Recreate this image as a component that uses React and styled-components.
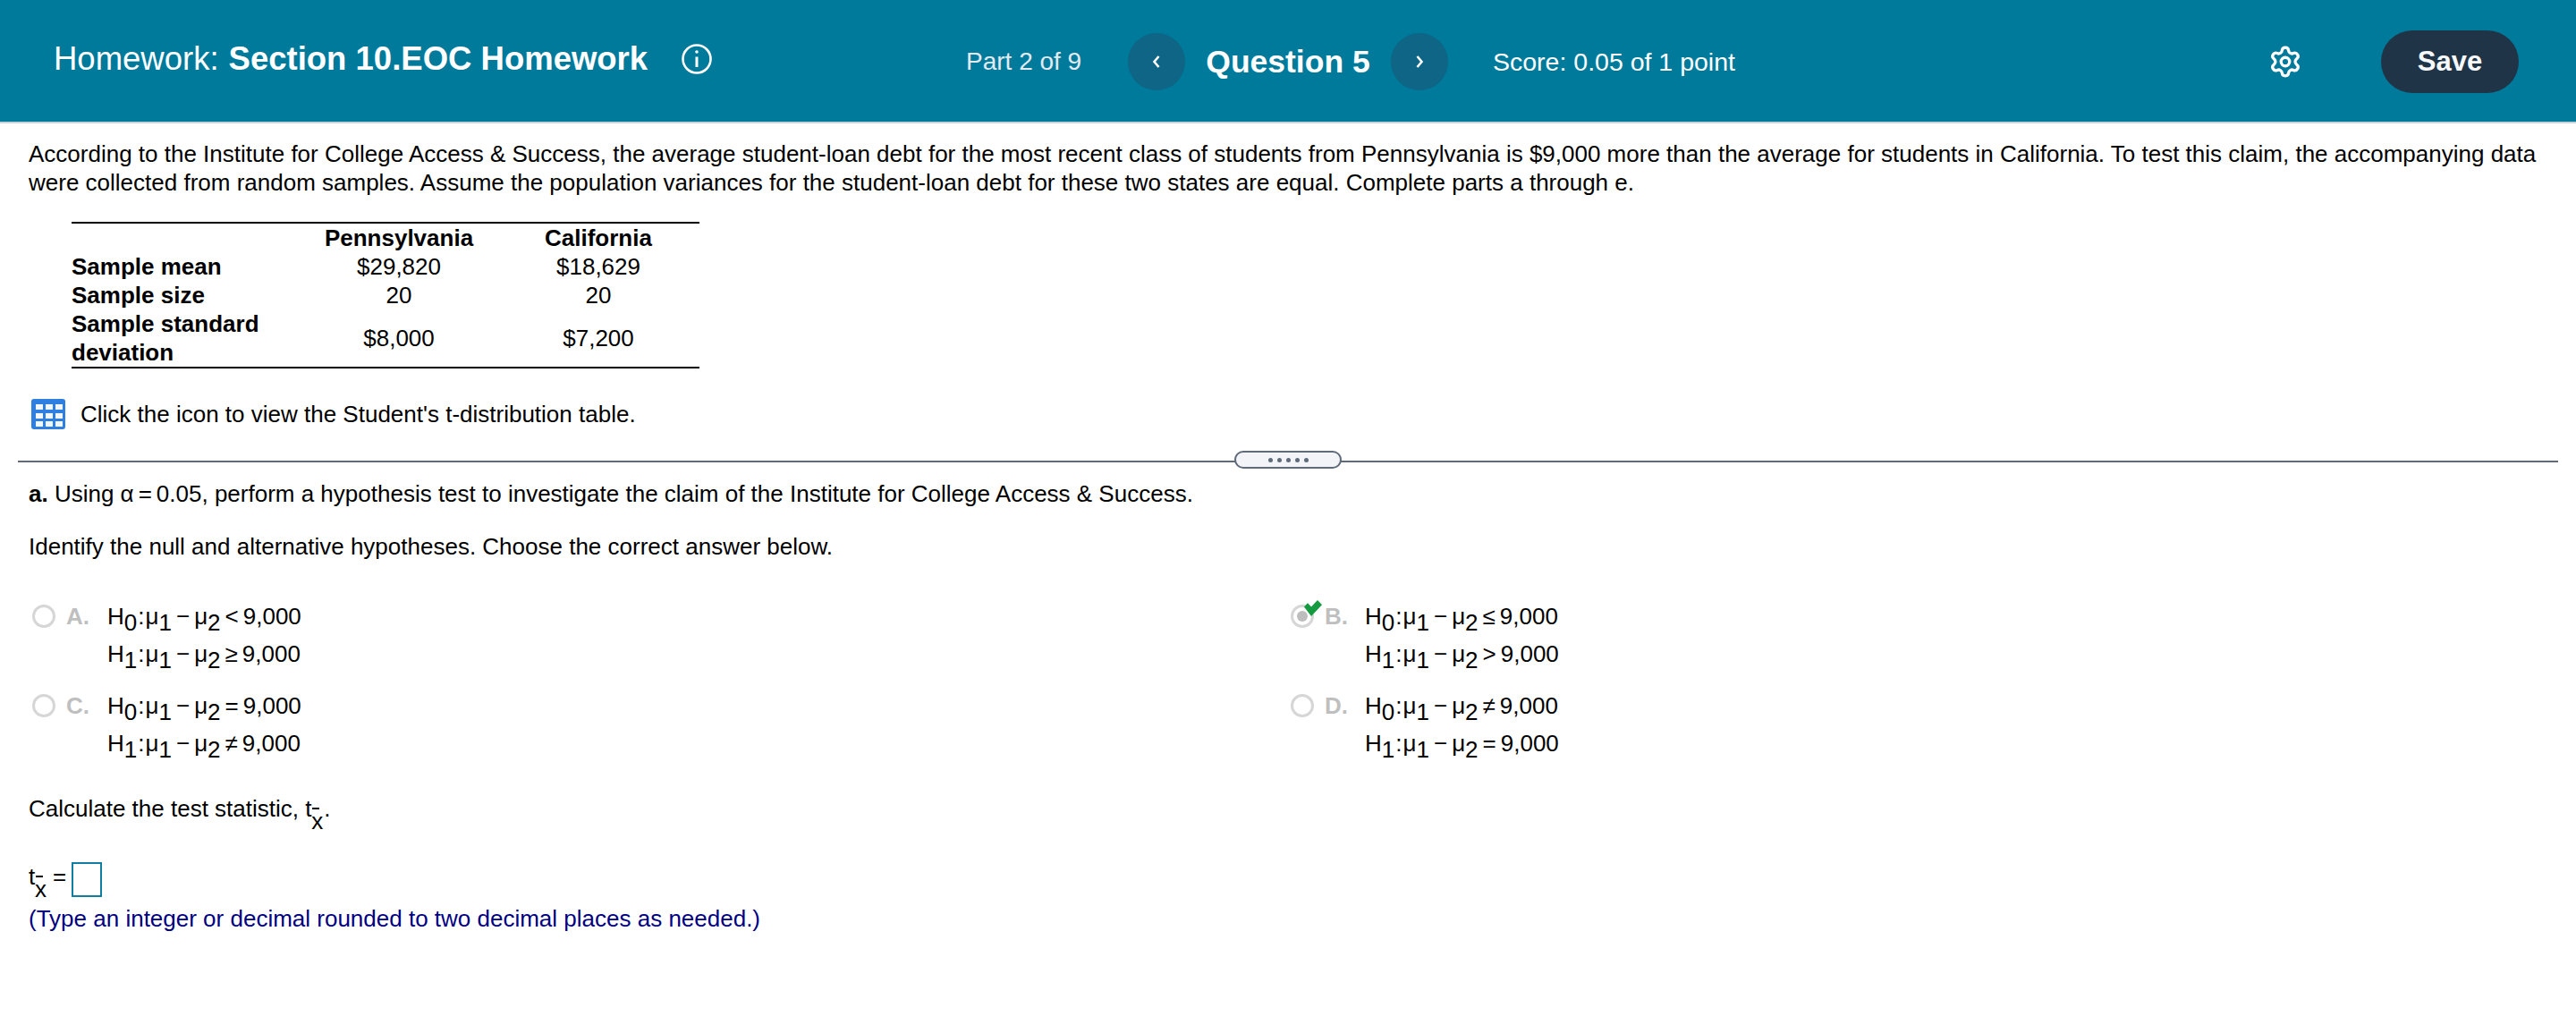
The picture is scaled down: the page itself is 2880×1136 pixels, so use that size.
import styled, { createGlobalStyle } from 'styled-components'
import { Settings } from 'lucide-react'

const GlobalStyle = createGlobalStyle`
  html, body {
    margin: 0;
    padding: 0;
    background: #fff;
  }
  body {
    font-family: 'Liberation Sans', Arial, sans-serif;
    color: #000;
  }
`

const Page = styled.div`
  width: 2880px;
  height: 1136px;
  overflow: hidden;
`

const Header = styled.header`
  height: 134px;
  padding-top: 2px;
  box-sizing: content-box;
  border-bottom: 2px solid #c9d3dc;
  background: #007a9b;
  display: flex;
  align-items: center;
  color: #fff;
`

const TitleBlock = styled.div`
  flex: 0 0 1080px;
  padding: 0 0 6px 60px;
  box-sizing: border-box;
  display: flex;
  align-items: center;
  font-size: 36.5px;
`

const TitleBold = styled.b`
  margin-left: 11px;
`

const InfoIcon = styled.svg`
  width: 36px;
  height: 36px;
  margin-left: 37px;
`

const PartLabel = styled.span`
  font-size: 28px;
  color: #e3eaf2;
  width: 181px;
`

const NavButton = styled.span`
  width: 64px;
  height: 64px;
  border-radius: 50%;
  background: #0e6585;
  display: flex;
  align-items: center;
  justify-content: center;
`

const QuestionTitle = styled.b`
  font-size: 35.5px;
  width: 230px;
  text-align: center;
`

const Score = styled.span`
  font-size: 28.5px;
  margin-left: 50px;
`

const GearWrap = styled.span`
  margin-left: auto;
  display: flex;
  color: #fff;
`

const SaveButton = styled.button`
  margin: 0 64px 0 88px;
  width: 154px;
  height: 70px;
  border: 0;
  border-radius: 35px;
  background: #1f3447;
  color: #f7f8fc;
  font-family: inherit;
  font-weight: 700;
  font-size: 31px;
`

const Content = styled.main`
  padding: 0 32px;
  font-size: 26px;
  line-height: 32px;
`

const Intro = styled.p`
  margin: 0;
  padding-top: 18px;
  width: 2830px;
`

const DataTable = styled.table`
  margin: 28px 0 0 48px;
  width: 702px;
  table-layout: fixed;
  border-collapse: collapse;
  border-top: 2px solid #000;
  border-bottom: 2px solid #000;
  font-size: 26px;
  line-height: 32px;
`

const HeadCell = styled.th`
  padding: 0;
  font-weight: 700;
  text-align: center;
  width: ${p => p.$w}px;
`

const RowLabel = styled.th`
  padding: 0;
  width: ${p => p.$w}px;
  font-weight: 700;
  text-align: left;
`

const DataCell = styled.td`
  padding: 0;
  text-align: center;
`

const IconRow = styled.div`
  margin: 34px 0 0 3px;
  display: flex;
  align-items: center;
  gap: 17px;
  height: 33px;
`

const Divider = styled.div`
  margin: 36px 0 0 -12px;
  width: 2840px;
  height: 2px;
  background: #5f6b7a;
  position: relative;
`

const Grip = styled.span`
  position: absolute;
  left: 1360px;
  top: -11px;
  width: 120px;
  height: 20px;
  box-sizing: border-box;
  border: 2px solid #5f6b7a;
  border-radius: 10px;
  background: #f3f4f7;
  display: flex;
  align-items: center;
  justify-content: center;
  gap: 5px;
`

const GripDot = styled.i`
  width: 5px;
  height: 5px;
  border-radius: 50%;
  background: #5f6b7a;
`

const Line = styled.p`
  margin: ${p => p.$top}px 0 0;
`

const Options = styled.div`
  margin-top: 41px;
  display: grid;
  grid-template-columns: 1407px 1fr;
  row-gap: 16px;
  padding-left: 4px;
`

const OptionRow = styled.div`
  display: flex;
  align-items: flex-start;
  line-height: 42px;
`

const RadioWrap = styled.span`
  position: relative;
  width: 26px;
  height: 26px;
  margin-top: 8px;
  flex: none;
`

const Radio = styled.span`
  display: block;
  width: 26px;
  height: 26px;
  box-sizing: border-box;
  border: 3px solid #d6d6d6;
  border-radius: 50%;
  padding: 4px;
`

const RadioDot = styled.span`
  display: block;
  width: 12px;
  height: 12px;
  border-radius: 50%;
  background: #bdbdbd;
`

const CheckMark = styled.svg`
  position: absolute;
  left: 15px;
  top: -5px;
  width: 20px;
  height: 18px;
`

const Letter = styled.b`
  width: ${p => p.$w}px;
  margin-left: 12px;
  color: #bfbfbf;
  flex: none;
`

const MathCol = styled.div`
  font-size: 26px;
`

const MathLine = styled.div`
  white-space: nowrap;
  height: 42px;
`

const Sub = styled.span`
  position: relative;
  top: 7px;
`

const Rel = styled.span`
  margin: 0 ${p => p.$right ?? 0}px 0 ${p => p.$left ?? 0}px;
`

/* t with x-bar under it, the bar is a rule so it doesn't sit on the x */
const Stat = styled.span`
  position: relative;
  display: inline-block;
  width: 21px;

  &::after {
    content: '';
    position: absolute;
    left: 8px;
    top: 15px;
    width: 8px;
    height: 2px;
    background: #000;
  }
`

const StatSub = styled.span`
  position: absolute;
  left: 7px;
  top: 14px;
`

const AnswerRow = styled.div`
  margin-top: 44px;
  height: 39px;
  display: flex;
  align-items: flex-start;
`

const AnswerBox = styled.span`
  width: 34px;
  height: 39px;
  box-sizing: border-box;
  border: 2px solid #0f7ea1;
`

const Hint = styled.p`
  margin: 8px 0 0;
  color: #000080;
`

const MathRow = ({ sub, rel }) => (
  <MathLine>
    H<Sub>{sub}</Sub><Rel $left={1} $right={1}>:</Rel>μ<Sub>1</Sub><Rel $left={5} $right={5}>−</Rel>μ<Sub>2</Sub>
    <Rel $left={5} $right={5}>{rel}</Rel>9,000
  </MathLine>
)

const Option = ({ letter, checked, first, second, width }) => (
  <OptionRow>
    <RadioWrap>
      <Radio>{checked && <RadioDot />}</Radio>
      {checked && (
        <CheckMark viewBox="0 0 20 17" preserveAspectRatio="none">
          <path d="M0 7 L4 3 L8 7 L15 0 L20 5 L8 17 Z" fill="#169a3f" />
        </CheckMark>
      )}
    </RadioWrap>
    <Letter $w={width}>{letter}</Letter>
    <MathCol>
      <MathRow sub={0} rel={first} />
      <MathRow sub={1} rel={second} />
    </MathCol>
  </OptionRow>
)

const StatSymbol = () => (
  <Stat>t<StatSub>x</StatSub></Stat>
)

const App = () => (
  <Page>
    <GlobalStyle />
    <Header>
      <TitleBlock>
        Homework:<TitleBold>Section 10.EOC Homework</TitleBold>
        <InfoIcon viewBox="0 0 36 36" fill="none" stroke="#fff">
          <circle cx="18" cy="18" r="15.5" strokeWidth="2.6" />
          <path d="M18 15.5 V27" strokeWidth="3" />
          <circle cx="18" cy="10" r="1.8" fill="#fff" stroke="none" />
        </InfoIcon>
      </TitleBlock>
      <PartLabel>Part 2 of 9</PartLabel>
      <NavButton>
        <svg width="12" height="16" viewBox="0 0 12 16" fill="none" stroke="#fff" strokeWidth="2.6">
          <path d="M8.5 2 L3.5 8 L8.5 14" />
        </svg>
      </NavButton>
      <QuestionTitle>Question 5</QuestionTitle>
      <NavButton>
        <svg width="12" height="16" viewBox="0 0 12 16" fill="none" stroke="#fff" strokeWidth="2.6">
          <path d="M3.5 2 L8.5 8 L3.5 14" />
        </svg>
      </NavButton>
      <Score>Score: 0.05 of 1 point</Score>
      <GearWrap><Settings size={38} strokeWidth={2.1} /></GearWrap>
      <SaveButton>Save</SaveButton>
    </Header>
    <Content>
      <Intro>
        According to the Institute for College Access &amp; Success, the average student-loan debt for the most recent class of students from Pennsylvania is $9,000 more than the average for students in California. To test this claim, the accompanying data were collected from random samples. Assume the population variances for the student-loan debt for these two states are equal. Complete parts a through e.
      </Intro>
      <DataTable>
        <thead>
          <tr>
            <RowLabel $w={256} />
            <HeadCell $w={220}>Pennsylvania</HeadCell>
            <HeadCell $w={226}>California</HeadCell>
          </tr>
        </thead>
        <tbody>
          <tr>
            <RowLabel>Sample mean</RowLabel>
            <DataCell>$29,820</DataCell>
            <DataCell>$18,629</DataCell>
          </tr>
          <tr>
            <RowLabel>Sample size</RowLabel>
            <DataCell>20</DataCell>
            <DataCell>20</DataCell>
          </tr>
          <tr>
            <RowLabel>Sample standard deviation</RowLabel>
            <DataCell>$8,000</DataCell>
            <DataCell>$7,200</DataCell>
          </tr>
        </tbody>
      </DataTable>
      <IconRow>
        <svg width="38" height="34" viewBox="0 0 38 34">
          <rect width="38" height="34" rx="3" fill="#2f7fe0" />
          {[6, 16, 25].map(y =>
            [5, 16, 27].map(x => <rect key={`${x}-${y}`} x={x} y={y} width="8" height="6" fill="#f2f7fd" />)
          )}
        </svg>
        <span>Click the icon to view the Student's t-distribution table.</span>
      </IconRow>
      <Divider>
        <Grip>{[0, 1, 2, 3, 4].map(i => <GripDot key={i} />)}</Grip>
      </Divider>
      <Line $top={19}>
        <b>a.</b> Using α<Rel $left={5} $right={5}>=</Rel>0.05, perform a hypothesis test to investigate the claim of the Institute for College Access &amp; Success.
      </Line>
      <Line $top={27}>Identify the null and alternative hypotheses. Choose the correct answer below.</Line>
      <Options>
        <Option letter="A." width={46} first="<" second="≥" />
        <Option letter="B." width={45} checked first="≤" second=">" />
        <Option letter="C." width={46} first="=" second="≠" />
        <Option letter="D." width={45} first="≠" second="=" />
      </Options>
      <Line $top={36}>
        Calculate the test statistic, <StatSymbol />.
      </Line>
      <AnswerRow>
        <StatSymbol />
        <Rel $left={6} $right={6}>=</Rel>
        <AnswerBox />
      </AnswerRow>
      <Hint>(Type an integer or decimal rounded to two decimal places as needed.)</Hint>
    </Content>
  </Page>
)

export default App
